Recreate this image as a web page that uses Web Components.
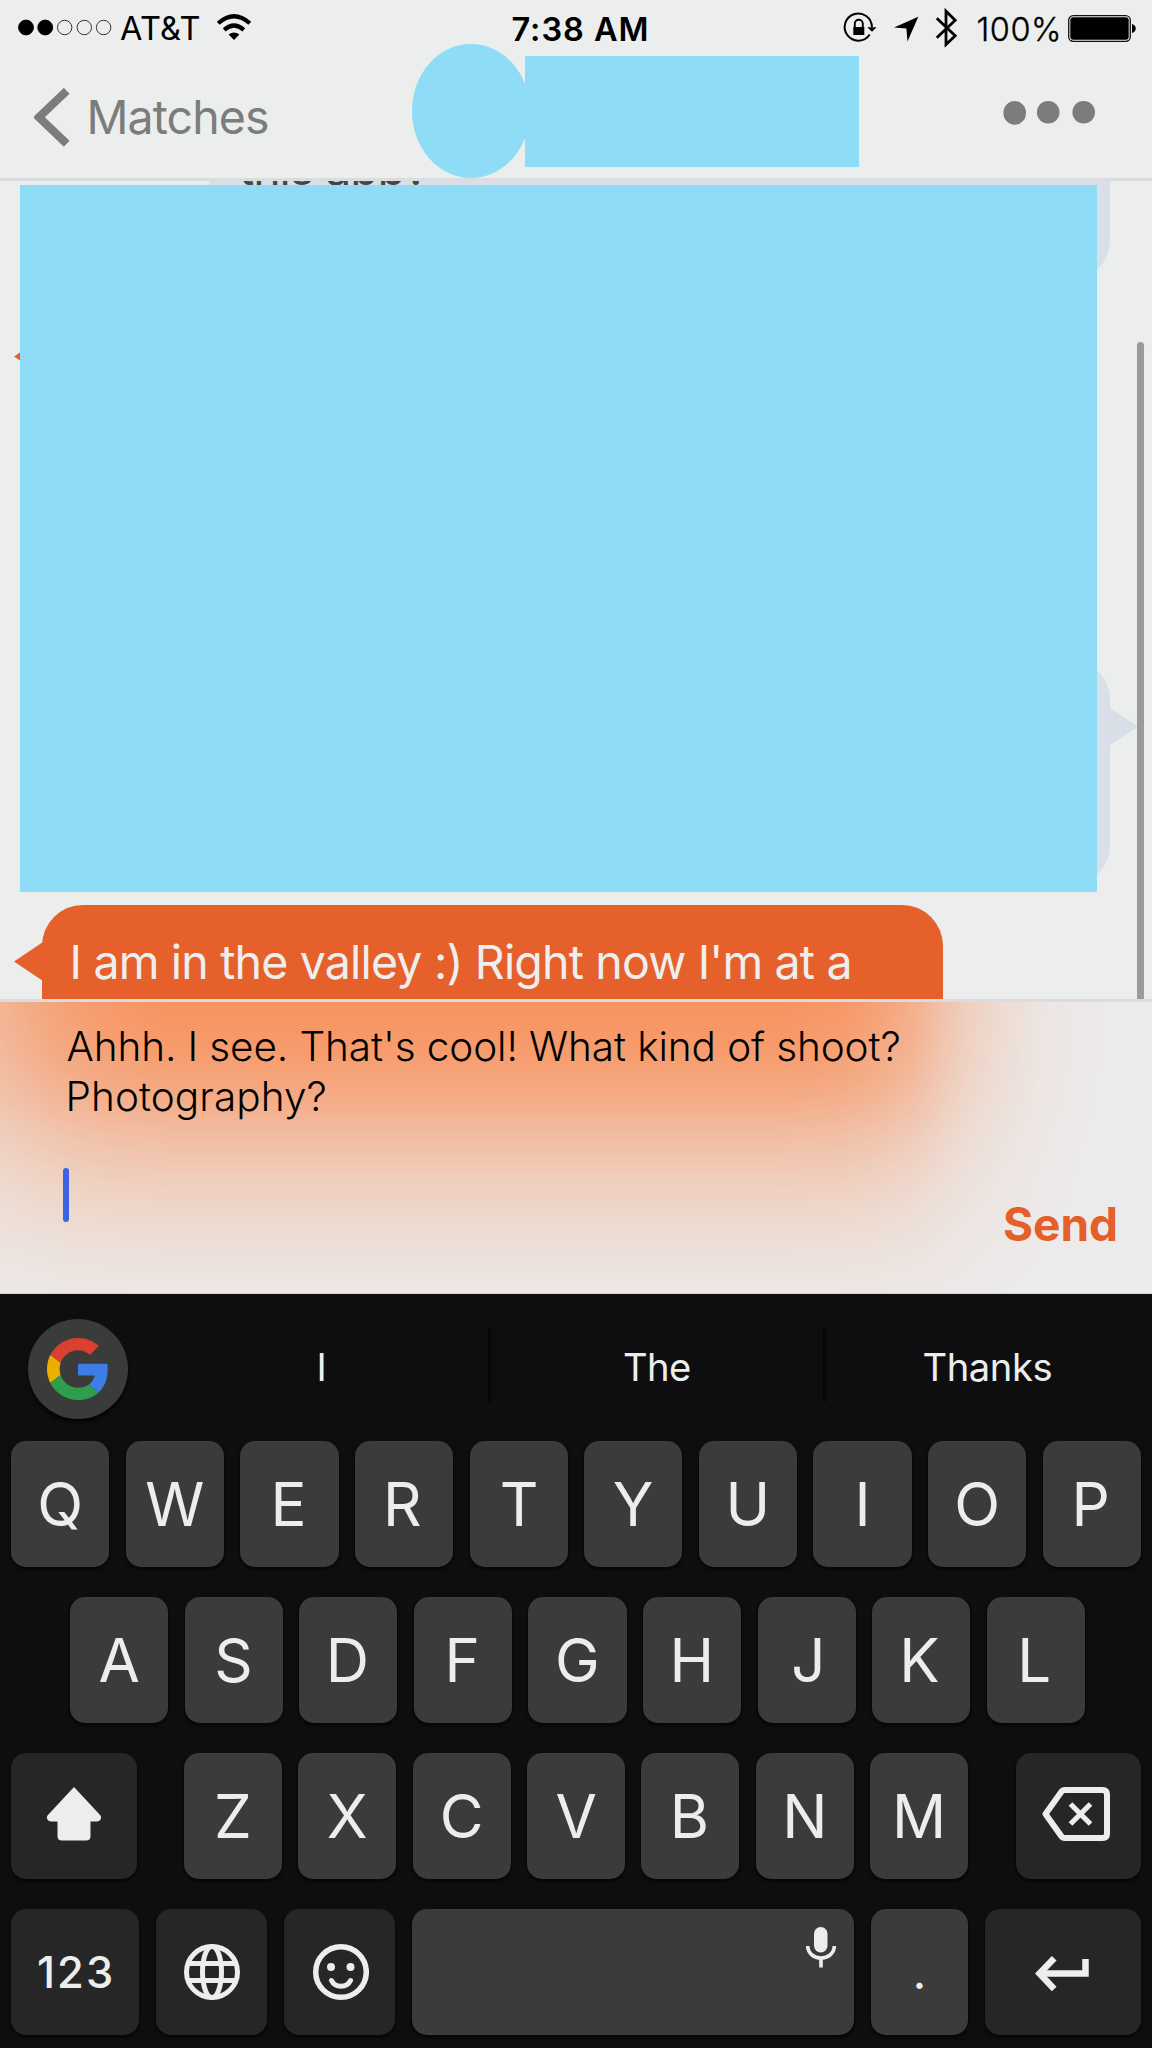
<!DOCTYPE html>
<html lang="en">
<head>
<meta charset="utf-8">
<title>Chat</title>
<style>
html,body{margin:0;padding:0}
body{width:1152px;height:2048px;overflow:hidden;background:#eceeed;font-family:Inter,"Liberation Sans",sans-serif}
</style>
</head>
<body>
<chat-screen></chat-screen>
<script>
const define = (name, html, after) => {
  const t = document.createElement('template');
  t.innerHTML = html;
  customElements.define(name, class extends HTMLElement {
    connectedCallback() {
      if (this.shadowRoot) return;
      this.attachShadow({mode: 'open'}).appendChild(t.content.cloneNode(true));
      if (after) after(this);
    }
  });
};

/* One line of text whose box is exactly its ink, tracked to the width in "ink". */
define('fit-text', `<style>:host{display:block;flex:none;white-space:pre;height:0;line-height:0}</style><slot></slot>`, el => {
  const cs = getComputedStyle(el), s = el.textContent;
  const c = document.createElement('canvas').getContext('2d');
  c.font = `${cs.fontWeight} ${cs.fontSize} ${cs.fontFamily}`;
  const m = c.measureText(s), ink = m.actualBoundingBoxLeft + m.actualBoundingBoxRight;
  const w = +el.getAttribute('ink') || ink;
  if (s.length > 1) el.style.letterSpacing = ((w - ink) / (s.length - 1)) + 'px';
  el.style.width = w + 'px';
  el.style.textIndent = m.actualBoundingBoxLeft + 'px';
});

define('status-bar', `<style>
:host{display:flex;height:44px;align-items:center;padding:14px 16px 0 18px;box-sizing:border-box;justify-content:space-between;color:#000;font-size:32.5px}
div{display:flex;align-items:center;height:30px}
svg{display:block;flex:none;overflow:visible}
.l{width:480px}.r{width:291px}
.t{font-weight:600}
</style>
<div class="l">
<svg width="94" height="30"><g stroke="#333" stroke-width="1"><circle cx="8" cy="13.5" r="7.4" fill="#000" stroke="#000"/><circle cx="27.2" cy="13.5" r="7.4" fill="#000" stroke="#000"/><g fill="none"><circle cx="46.7" cy="13.5" r="7.2"/><circle cx="66.3" cy="13.5" r="7.2"/><circle cx="85.6" cy="13.5" r="7.2"/></g></g></svg>
<fit-text ink="79.5" style="margin-left:8px">AT&amp;T</fit-text>
<svg width="34" height="30" style="margin-left:17px"><path d="M1.2 9.3Q17-4.8 32.8 9.3" fill="none" stroke="#000" stroke-width="4.2"/><path d="M7.2 15.8Q17 7.200 26.8 15.8" fill="none" stroke="#000" stroke-width="4.2"/><path d="M11.6 20.500Q17 16.300 22.4 20.500L17 26Z"/></svg>
</div>
<fit-text class="t" ink="134" style="margin-left:14.500px;margin-right:198.500px;margin-top:1px">7:38 AM</fit-text>
<div class="r">
<svg width="32" height="30"><path d="M24.7 20.5A13.6 13.6 0 1 1 26.9 13" fill="none" stroke="#000" stroke-width="2"/><path d="M22.3 13.2H31.6L27 17.8Z"/><path d="M8.3 13H19.3V21H8.3Z"/><path d="M9.8 14V9.8A4 4 0 0 1 17.8 9.8V14" fill="none" stroke="#000" stroke-width="1.9"/></svg>
<svg width="25" height="30" style="margin-left:17px"><path d="M24.3 2.8L13.5 27.5L12.4 14.5L0 13.4Z"/></svg>
<svg width="22" height="30" style="margin-left:17px"><path d="M.8 4.2L19.2 21.8L10 30.5V-2.8L19.2 6.3L.8 23.8" fill="none" stroke="#000" stroke-width="2.8"/></svg>
<fit-text ink="80.5" style="margin-left:19.5px;margin-top:1px;font-weight:300;-webkit-text-stroke:.35px #000">100%</fit-text>
<svg width="68" height="30" style="margin-left:10px"><rect x=".7" y="1.7" width="61.6" height="25.6" rx="4.5" fill="none" stroke="#111" stroke-width="1.3"/><rect x="2.3" y="3.2" width="58.4" height="22.6" rx="3"/><path d="M64 10C69 11 69 18 64 19Z"/></svg>
</div>`);

define('nav-bar', `<style>
:host{display:flex;height:134px;align-items:center;color:#7b7d7c;box-sizing:border-box;padding:0 67px 0 34px}
svg{display:block;flex:none}
.b{margin-left:20.500px;font-size:46.5px;align-self:flex-start;margin-top:73.3px}
.chev{align-self:flex-start;margin-top:44px}
.who{display:flex;align-items:flex-start;align-self:flex-start;margin-left:143.500px}
.av{width:118.5px;height:134px;border-radius:50%;background:#8fdcf6;margin-right:-5px}
.nm{width:334px;height:111px;background:#8fdcf6;margin-top:12px}
.more{align-self:flex-start;margin:57px 0 0 143.500px}
</style>
<svg class="chev" width="36" height="59"><path d="M32.7 2.8L4.9 29.3L32.7 55.8" fill="none" stroke="#7b7d7c" stroke-width="8.2"/></svg>
<fit-text class="b" ink="177.5">Matches</fit-text>
<div class="who"><div class="av"></div><div class="nm"></div></div>
<svg class="more" width="93" height="25" fill="#7b7d7c"><ellipse cx="11.7" cy="11.9" rx="11.3" ry="11.9"/><circle cx="45.2" cy="11.3" r="11.3"/><circle cx="80.7" cy="11.3" r="11.3"/></svg>`);

/* Bubble: side="left" is received (orange), side="right" is sent (grey). */
define('chat-bubble', `<style>
:host{display:flex;position:relative;flex:none;box-sizing:border-box;border-radius:41px;font-size:46.5px;align-items:flex-start}
:host([side=left]){background:#e5602a;color:#eee;margin-left:42px;align-self:flex-start}
:host([side=right]){background:#d9dfe6;color:#454545;margin-right:42px;align-self:flex-end}
svg{position:absolute;top:var(--tail,37px)}
:host([side=left]) svg{left:-28px;fill:#e5602a}
:host([side=right]) svg{right:-28px;fill:#d9dfe6;transform:scaleX(-1)}
:host([notail]) svg{display:none}
</style><svg width="30" height="39"><path d="M0 19.5L29 0V39Z"/></svg><slot></slot>`);

define('chat-log', `<style>
:host{display:flex;flex-direction:column;gap:19px;position:relative;height:818px;overflow:hidden;border:solid #dadce1;border-width:3px 0;background:#eceeed}
.cover{position:absolute;left:20px;top:4px;width:1077px;height:707px;background:#8fdcf6}
.bar{position:absolute;left:1137px;top:161px;width:7px;height:700px;border-radius:4px;background:#999b99}
</style>
<chat-bubble side="right" notail style="width:901px;height:220px;margin-top:-120px"><fit-text ink="188" style="margin:106.7px 0 0 30px">this app?</fit-text></chat-bubble>
<chat-bubble side="left" style="width:700px;height:340px"></chat-bubble>
<chat-bubble side="right" style="width:700px;height:227px;--tail:48px"></chat-bubble>
<chat-bubble side="left" style="width:901px;height:200px"><fit-text ink="776" style="margin:57px 0 0 31.5px">I am in the valley :) Right now I'm at a</fit-text></chat-bubble>
<div class="cover"></div><div class="bar"></div>`);

define('chat-composer', `<style>
:host{display:flex;position:relative;height:292px;overflow:hidden;background:#ecebeb;justify-content:space-between;box-sizing:border-box;border-bottom:1px solid #d8d4d3}
.glow{position:absolute;inset:0;background:#f7935f;
mask-image:linear-gradient(180deg,#000 0,rgba(0,0,0,.93) 40px,rgba(0,0,0,.83) 70px,rgba(0,0,0,.7) 100px,rgba(0,0,0,.54) 130px,rgba(0,0,0,.37) 170px,rgba(0,0,0,.23) 210px,rgba(0,0,0,.12) 250px,rgba(0,0,0,.05) 290px),linear-gradient(90deg,rgba(0,0,0,.62) 0,rgba(0,0,0,.73) 30px,rgba(0,0,0,.83) 60px,rgba(0,0,0,.92) 100px,#000 170px,#000 780px,rgba(0,0,0,.95) 840px,rgba(0,0,0,.83) 880px,rgba(0,0,0,.67) 915px,rgba(0,0,0,.45) 945px,rgba(0,0,0,.3) 970px,rgba(0,0,0,.17) 1005px,rgba(0,0,0,.07) 1040px,rgba(0,0,0,.02) 1080px,transparent 1120px);mask-composite:intersect}
.in{position:relative;width:840px;display:flex;flex-direction:column;padding:45px 0 0 67.500px;box-sizing:border-box;font-weight:300;font-size:40.5px;color:#000}
.caret{width:6px;height:54px;border-radius:3px;background:#3b63e2;margin:70.5px 0 0 -5px}
.send{position:relative;font-weight:700;font-size:46px;color:#e55f2a;margin:221.700px 36px 0 0}
</style>
<div class="glow"></div>
<div class="in"><fit-text ink="832">Ahhh. I see. That's cool! What kind of shoot?</fit-text><fit-text ink="257" style="margin:50px 0 0 1px">Photography?</fit-text><div class="caret"></div></div>
<fit-text class="send" ink="112">Send</fit-text>`);

define('key-cap', `<style>
:host{display:flex;flex:1 1 0;min-width:0;height:125.5px;border-radius:15px;background:#3b3b3b;box-shadow:0 2px 2px 1px #08080a;align-items:center;justify-content:center;color:#eceeed;font-size:60px;box-sizing:border-box}
:host([dark]){background:#262626}
:host([wide]){flex:none}
::slotted(svg){display:block;flex:none}
</style><slot></slot>`);

define('key-row', `<style>:host{display:flex;gap:16.4px;flex:none}</style><slot></slot>`);

define('suggestion-strip', `<style>
:host{display:flex;height:147px;align-items:flex-start;padding-left:28px;font-size:38.2px;color:#eceeed;box-sizing:border-box}
.g{width:100px;height:100px;border-radius:50%;background:#3b3b3b;margin-top:25px;display:flex;align-items:center;justify-content:center;box-shadow:0 4px 3px #060607}
.w{display:flex;justify-content:center;padding-top:72.500px;box-sizing:border-box}
i{width:3px;height:75px;background:#060608;margin-top:33px}
</style>
<div class="g"><svg width="62" height="62" viewBox="0 0 48 48"><path fill="#db3f2f" d="M24 9.5c3.54 0 6.71 1.22 9.21 3.6l6.85-6.85C35.9 2.38 30.47 0 24 0 14.62 0 6.51 5.38 2.56 13.22l7.98 6.19C12.43 13.72 17.74 9.5 24 9.5z"/><path fill="#3d7de6" d="M46.98 24.55c0-1.57-.15-3.09-.38-4.55H24v9.02h12.94c-.58 2.96-2.26 5.48-4.78 7.18l7.73 6c4.51-4.18 7.09-10.36 7.09-17.65z"/><path fill="#eab000" d="M10.53 28.59c-.48-1.45-.76-2.99-.76-4.59s.27-3.14.76-4.59l-7.98-6.19C.92 16.46 0 20.12 0 24c0 3.88.92 7.54 2.56 10.78l7.97-6.19z"/><path fill="#2e9e4c" d="M24 48c6.48 0 11.93-2.13 15.89-5.81l-7.73-6c-2.15 1.45-4.92 2.3-8.16 2.3-6.26 0-11.57-4.22-13.47-9.91l-7.98 6.19C6.51 42.62 14.62 48 24 48z"/></svg></div>
<div class="w" style="width:333px;margin-left:27px"><fit-text>I</fit-text></div><i></i>
<div class="w" style="width:332px"><fit-text ink="66">The</fit-text></div><i></i>
<div class="w" style="width:323px"><fit-text ink="128">Thanks</fit-text></div>`);

const keys = s => [...s].map(c => `<key-cap><fit-text>${c}</fit-text></key-cap>`).join('');
define('key-board', `<style>
:host{display:flex;flex-direction:column;height:754px;background:#0e0e10}
.rows{display:flex;flex-direction:column;gap:30.5px}
.ic{fill:none;stroke:#eceeed;stroke-linejoin:round}
</style>
<suggestion-strip></suggestion-strip>
<div class="rows">
<key-row style="margin:0 11px">${keys('QWERTYUIOP')}</key-row>
<key-row style="margin:0 67px 0 70px">${keys('ASDFGHJKL')}</key-row>
<key-row style="margin:0 11px">
<key-cap dark wide style="width:126px;margin-right:30.6px"><svg width="56" height="54" style="margin-top:-3px"><path fill="#eceeed" d="M28 0L53.6 27.5C57 31 54 34.5 50.5 34.5H44.5V49Q44.5 53.5 40 53.5H16Q11.5 53.5 11.5 49V34.5H5.500C2 34.500-1 31 2.400 27.500Z"/></svg></key-cap>
${keys('ZXCVBNM')}
<key-cap dark wide style="width:125px;margin-left:31.600px"><svg class="ic" width="68" height="54" style="margin:-3px 4px 0 0" stroke-width="6"><path d="M3.500 27L19 5.200Q20.500 3 23 3H60.500Q65 3 65 7.500V46.500Q65 51 60.500 51H23Q20.500 51 19 48.800Z"/><path d="M28.500 17L48.500 37M48.500 17L28.500 37" stroke-width="5.200"/></svg></key-cap>
</key-row>
<key-row style="margin:0 11px;gap:17px">
<key-cap dark wide style="width:128px;font-size:43.500px;font-weight:500"><fit-text ink="72">123</fit-text></key-cap>
<key-cap dark wide style="width:111px"><svg class="ic" width="58" height="58" stroke-width="5"><circle cx="29" cy="29" r="25.500"/><ellipse cx="29" cy="29" rx="9.500" ry="25.500"/><path d="M5 20.500H53M5 37.500H53"/></svg></key-cap>
<key-cap dark wide style="width:111px"><svg class="ic" width="58" height="58" stroke-width="5.500"><circle cx="30" cy="29" r="25.300"/><path d="M20.500 37.500C24 45 36 45 39.500 37.500" stroke-width="5" stroke-linecap="round"/><circle cx="20" cy="24" r="4" fill="#eceeed" stroke="none"/><circle cx="39.500" cy="24" r="4" fill="#eceeed" stroke="none"/></svg></key-cap>
<key-cap wide style="width:442px;justify-content:flex-end;align-items:flex-start"><svg width="30" height="41" style="margin:17.500px 18px 0 0"><rect x="8" y="0" width="13.500" height="25.500" rx="6.700" fill="#eceeed"/><path d="M1.700 19C2 35 28 35 28.300 19M15 31V40.500" fill="none" stroke="#eceeed" stroke-width="3.600"/></svg></key-cap>
<key-cap wide style="width:97px"><fit-text style="font-size:48px">.</fit-text></key-cap>
<key-cap dark wide style="width:156px"><svg width="54" height="36" style="margin:5px 3px 0 0" fill="none" stroke="#eceeed" stroke-width="6.500"><path d="M50.500 3V17.600H5"/><path d="M19.200 2.300L4.500 17.600L19.200 32.900"/></svg></key-cap>
</key-row>
</div>`);

define('chat-screen', `<style>:host{display:flex;flex-direction:column;width:1152px;height:2048px;overflow:hidden}
:host>*{flex:none}</style>
<status-bar></status-bar><nav-bar></nav-bar><chat-log></chat-log><chat-composer></chat-composer><key-board></key-board>`);
</script>
</body>
</html>
